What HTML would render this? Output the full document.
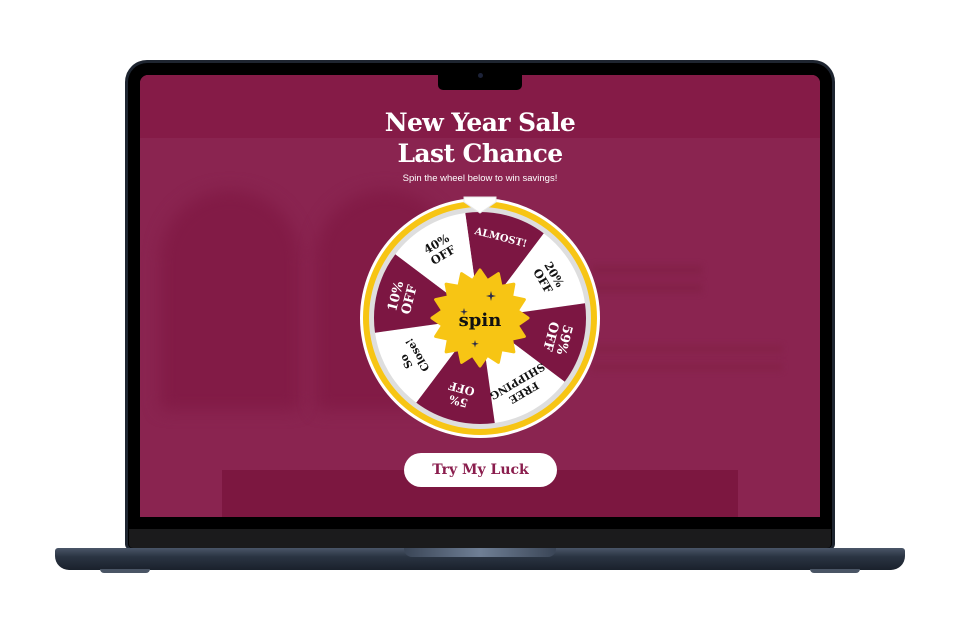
<!DOCTYPE html>
<html><head><meta charset="utf-8"><style>
*{margin:0;padding:0;box-sizing:border-box}
body{width:960px;height:640px;background:#fff;position:relative;overflow:hidden;font-family:"Liberation Sans",sans-serif}
.a{position:absolute}
</style></head><body>
<div class="a" style="left:125px;top:60px;width:710px;height:490px;border-radius:22px 22px 6px 6px;background:#1e2530"></div>
<div class="a" style="left:128px;top:63px;width:704px;height:485px;border-radius:19px 19px 4px 4px;background:#000"></div>
<div class="a" style="left:129px;top:529px;width:702px;height:19px;background:#1b1b1c;border-radius:0 0 4px 4px"></div>
<div class="a" style="left:140px;top:75px;width:680px;height:442px;background:#8a2450;border-radius:8px 8px 0 0;overflow:hidden">
  <div class="a" style="left:0;top:0;width:680px;height:63px;background:#851b47"></div>
  <div class="a" style="left:20px;top:115px;width:140px;height:220px;background:#821b46;border-radius:70px 70px 6px 6px;filter:blur(8px)"></div>
  <div class="a" style="left:175px;top:115px;width:140px;height:220px;background:#821b46;border-radius:70px 70px 6px 6px;filter:blur(8px)"></div>
  <div class="a" style="left:82px;top:395px;width:516px;height:50px;background:#7c1740"></div>
  <div class="a" style="left:452px;top:190px;width:110px;height:10px;background:#842149;filter:blur(3px)"></div>
  <div class="a" style="left:452px;top:208px;width:110px;height:10px;background:#842149;filter:blur(3px)"></div>
  <div class="a" style="left:452px;top:270px;width:190px;height:8px;background:#862249;filter:blur(3px)"></div>
  <div class="a" style="left:452px;top:288px;width:190px;height:8px;background:#862249;filter:blur(3px)"></div>
</div>
<div class="a" style="left:438px;top:74px;width:84px;height:16px;background:#000;border-radius:0 0 5px 5px"></div>
<div class="a" style="left:478px;top:73px;width:5px;height:5px;background:#1c2238;border-radius:50%"></div>
<div class="a" style="left:55px;top:548px;width:850px;height:22px;border-radius:3px 3px 14px 14px;background:linear-gradient(#4a5668,#2a3442 40%,#1a212c)"></div>
<div class="a" style="left:404px;top:548px;width:152px;height:9px;border-radius:0 0 8px 8px;background:linear-gradient(90deg,#3a4556,#6f7f95 50%,#3a4556)"></div>
<div class="a" style="left:100px;top:569px;width:50px;height:4px;background:#4a5565;border-radius:0 0 4px 4px"></div>
<div class="a" style="left:810px;top:569px;width:50px;height:4px;background:#4a5565;border-radius:0 0 4px 4px"></div>
<div class="a" style="left:330px;top:107px;width:300px;text-align:center;color:#fff;font-family:'DejaVu Serif',serif;font-weight:bold;font-size:25px;line-height:31px;letter-spacing:-0.6px">New Year Sale<br>Last Chance</div>
<div class="a" style="left:330px;top:173px;width:300px;text-align:center;color:#fff;font-size:9.5px">Spin the wheel below to win savings!</div>
<svg class="a" style="left:360px;top:198px" width="240" height="240" viewBox="0 0 240 240">
<circle cx="120" cy="120" r="120" fill="#fff"/>
<circle cx="120" cy="120" r="117" fill="#f7c514"/>
<circle cx="120" cy="120" r="111" fill="#dedede"/>
<g>
<path d="M120,120 L120,14 A106,106 0 0 1 194.95,45.05 Z" fill="#7c1642" transform="rotate(-8 120 120)"/>
<path d="M120,120 L120,14 A106,106 0 0 1 194.95,45.05 Z" fill="#fff" transform="rotate(37 120 120)"/>
<path d="M120,120 L120,14 A106,106 0 0 1 194.95,45.05 Z" fill="#7c1642" transform="rotate(82 120 120)"/>
<path d="M120,120 L120,14 A106,106 0 0 1 194.95,45.05 Z" fill="#fff" transform="rotate(127 120 120)"/>
<path d="M120,120 L120,14 A106,106 0 0 1 194.95,45.05 Z" fill="#7c1642" transform="rotate(172 120 120)"/>
<path d="M120,120 L120,14 A106,106 0 0 1 194.95,45.05 Z" fill="#fff" transform="rotate(217 120 120)"/>
<path d="M120,120 L120,14 A106,106 0 0 1 194.95,45.05 Z" fill="#7c1642" transform="rotate(262 120 120)"/>
<path d="M120,120 L120,14 A106,106 0 0 1 194.95,45.05 Z" fill="#fff" transform="rotate(307 120 120)"/>
</g>
<g font-family="'DejaVu Serif',serif" font-weight="bold" font-size="11.5" text-anchor="middle">
<text transform="rotate(14.5 120 120)" x="120" y="40" fill="#fff" font-size="10">ALMOST!</text>
<text transform="rotate(59.5 120 120)" fill="#111"><tspan x="120" y="38">20%</tspan><tspan x="120" y="51">OFF</tspan></text>
<text transform="rotate(104.5 120 120)" fill="#fff" font-size="13"><tspan x="120" y="37">59%</tspan><tspan x="120" y="51">OFF</tspan></text>
<text transform="rotate(149.5 120 120)" fill="#111" font-size="10.5"><tspan x="120" y="37">FREE</tspan><tspan x="120" y="50">SHIPPING</tspan></text>
<text transform="rotate(194.5 120 120)" fill="#fff"><tspan x="120" y="38">5%</tspan><tspan x="120" y="51">OFF</tspan></text>
<text transform="rotate(239.5 120 120)" fill="#111" font-size="10.5"><tspan x="120" y="38">So</tspan><tspan x="120" y="51">Close!</tspan></text>
<text transform="rotate(284.5 120 120)" fill="#fff" font-size="13"><tspan x="120" y="37">10%</tspan><tspan x="120" y="51">OFF</tspan></text>
<text transform="rotate(329.5 120 120)" fill="#111"><tspan x="120" y="38">40%</tspan><tspan x="120" y="51">OFF</tspan></text>
</g>
<polygon fill="#f7c514" stroke="#f7c514" stroke-width="3" stroke-linejoin="round" points="120,72 127.4,82.7 138.4,75.6 141.1,88.4 153.9,86.1 151.6,98.9 164.4,101.6 157.3,112.6 168,120 157.3,127.4 164.4,138.4 151.6,141.1 153.9,153.9 141.1,151.6 138.4,164.4 127.4,157.3 120,168 112.6,157.3 101.6,164.4 98.9,151.6 86.1,153.9 88.4,141.1 75.6,138.4 82.7,127.4 72,120 82.7,112.6 75.6,101.6 88.4,98.9 86.1,86.1 98.9,88.4 101.6,75.6 112.6,82.7"/>
<text x="120" y="128" text-anchor="middle" font-family="'DejaVu Serif',serif" font-weight="bold" font-size="18" fill="#111">spin</text>
<g fill="#2a2a4a">
<path d="M131,93 l1,4 4,1 -4,1 -1,4 -1,-4 -4,-1 4,-1z"/>
<path d="M104,110 l.8,3 3,.8 -3,.8 -.8,3 -.8,-3 -3,-.8 3,-.8z"/>
<path d="M115,142 l.8,3 3,.8 -3,.8 -.8,3 -.8,-3 -3,-.8 3,-.8z"/>
</g>
</svg>
<svg class="a" style="left:463px;top:196px" width="34" height="18" viewBox="0 0 34 18"><path d="M1,1 H33 V6 L17,17 L1,6 Z" fill="#fff" stroke="#e8e8e8" stroke-width="1"/></svg>
<div class="a" style="left:404px;top:453px;width:153px;height:34px;background:#fff;border-radius:17px;text-align:center;line-height:34px;color:#8a1d4d;font-family:'DejaVu Serif',serif;font-weight:bold;font-size:14px">Try My Luck</div>
</body></html>
